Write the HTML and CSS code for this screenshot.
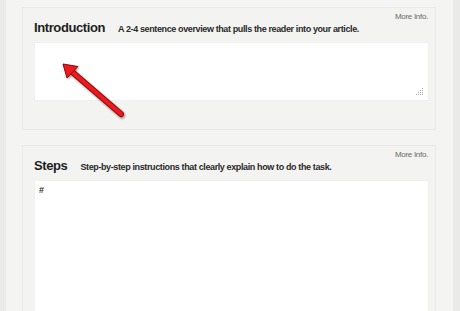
FILE: index.html
```html
<!DOCTYPE html>
<html>
<head>
<meta charset="utf-8">
<link rel="stylesheet" href="styles.css">
</head>
<body>
<div class="page">
  <section class="card">
    <a class="more">More Info.</a>
    <div class="card-head">
      <h2 class="title">Introduction</h2>
      <p class="hint">A 2-4 sentence overview that pulls the reader into your article.</p>
    </div>
    <div class="field field-short">
      <svg class="grip" width="8" height="8" viewBox="0 0 8 8">
        <rect x="6" y="0" width="1" height="1"/>
        <rect x="4" y="2" width="1" height="1"/><rect x="6" y="2" width="1" height="1"/>
        <rect x="2" y="4" width="1" height="1"/><rect x="4" y="4" width="1" height="1"/><rect x="6" y="4" width="1" height="1"/>
        <rect x="0" y="6" width="1" height="1"/><rect x="2" y="6" width="1" height="1"/><rect x="4" y="6" width="1" height="1"/><rect x="6" y="6" width="1" height="1"/>
      </svg>
    </div>
  </section>
  <section class="card">
    <a class="more">More Info.</a>
    <div class="card-head">
      <h2 class="title">Steps</h2>
      <p class="hint">Step-by-step instructions that clearly explain how to do the task.</p>
    </div>
    <div class="field field-tall"><span class="hash">#</span></div>
  </section>
</div>
<svg class="arrow" width="460" height="311" viewBox="0 0 460 311">
  <defs>
    <filter id="sh" x="-20%" y="-20%" width="140%" height="140%">
      <feGaussianBlur stdDeviation="0.8"/>
    </filter>
  </defs>
  <g opacity="0.45" filter="url(#sh)" transform="translate(1,1.5)">
    <line x1="121" y1="114" x2="70" y2="70" stroke="#400" stroke-width="6" stroke-linecap="round"/>
    <polygon points="63,64 78,66.5 67,78" fill="#400"/>
  </g>
  <line x1="121" y1="114" x2="70" y2="70" stroke="#8a0a0a" stroke-width="6" stroke-linecap="round"/>
  <line x1="121" y1="114" x2="70" y2="70" stroke="#ec1a1f" stroke-width="4.2" stroke-linecap="round"/>
  <polygon points="63,64 78,66.5 67,78" fill="#ec1a1f" stroke="#8a0a0a" stroke-width="1" stroke-linejoin="round"/>
</svg>
</body>
</html>
```
FILE: styles.css
```css
html, body {
  margin: 0;
  padding: 0;
}
body {
  background: #eaeae9;
  font-family: "Liberation Sans", Arial, sans-serif;
  width: 460px;
  height: 311px;
  overflow: hidden;
  position: relative;
}
.page {
  margin: 0 7px 0 6px;
  height: 311px;
  overflow: hidden;
  box-sizing: border-box;
  background: #f4f4f2;
  padding: 7px 17px 0 16px;
}
.card {
  position: relative;
  background: #f3f3f1;
  border: 1px solid #eaeae8;
  padding: 0 6px 28px 11px;
  margin-bottom: 15px;
}
.card-head {
  height: 34px;
  box-sizing: border-box;
  padding-top: 12px;
  display: flex;
  align-items: baseline;
}
.title {
  margin: 0;
  font-size: 13px;
  line-height: 15px;
  font-weight: bold;
  letter-spacing: -0.4px;
  color: #1e1e1e;
}
.hint {
  margin: 0 0 0 13px;
  font-size: 9px;
  line-height: 11px;
  font-weight: bold;
  letter-spacing: -0.38px;
  color: #2a2a2a;
}
.more {
  position: absolute;
  top: 4px;
  right: 7px;
  font-size: 8px;
  line-height: 10px;
  letter-spacing: -0.3px;
  color: #6a6a6a;
}
.field {
  position: relative;
  background: #fff;
  border: 1px solid #f0f0ee;
  box-sizing: border-box;
}
.field-short {
  height: 59px;
}
.field-tall {
  height: 160px;
  padding: 2px 0 0 4px;
  line-height: 10px;
}
.grip {
  position: absolute;
  right: 4px;
  bottom: 4px;
  fill: #b0b0b0;
}
.hash {
  font-size: 9px;
  font-weight: bold;
  color: #333;
}
.arrow {
  position: absolute;
  top: 0;
  left: 0;
  pointer-events: none;
}
```
